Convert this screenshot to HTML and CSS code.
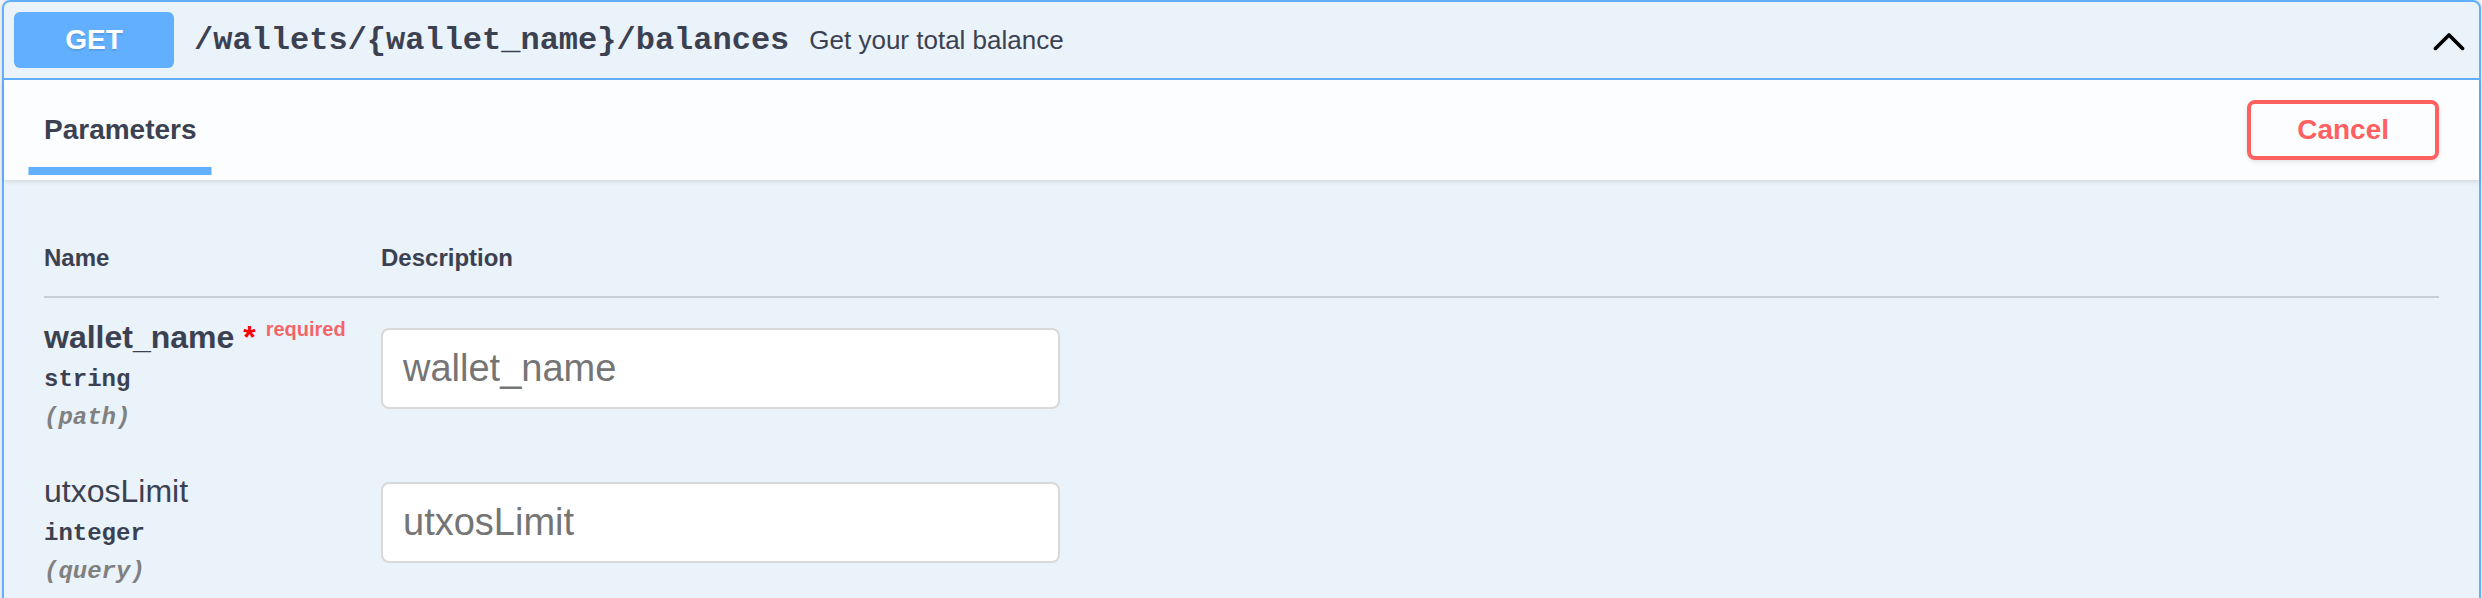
FILE: index.html
```html
<!DOCTYPE html>
<html lang="en">
<head>
<meta charset="utf-8">
<title>GET /wallets/{wallet_name}/balances</title>
<link rel="stylesheet" href="styles.css">
</head>
<body>
<div class="opblock">
  <div class="summary">
    <span class="method">GET</span>
    <span class="path">/wallets/{wallet_name}/balances</span>
    <div class="summary-desc">Get your total balance</div>
    <svg class="arrow" width="40" height="40" viewBox="0 0 20 20" aria-hidden="true"><path d="M17.418 14.908c-.362.362-.95.362-1.313 0L10 8.802 3.893 14.91c-.362.363-.95.363-1.313 0s-.362-.95 0-1.313l6.77-6.77a.931.931 0 0 1 1.314 0l6.77 6.770c.365.365.365.953.002 1.312z"/></svg>
  </div>
  <div class="section-header">
    <div class="tab-header">
      <h4 class="tab-item"><span>Parameters</span></h4>
    </div>
    <button class="btn-cancel" type="button">Cancel</button>
  </div>
  <div class="table-container">
    <div class="params">
      <div class="th">Name</div>
      <div class="th">Description</div>

      <div class="td">
        <div class="param-name required">wallet_name<span class="star">&nbsp;*</span></div>
        <div class="param-type">string</div>
        <div class="param-in">(path)</div>
      </div>
      <div class="td">
        <input class="param-input" type="text" placeholder="wallet_name">
      </div>

      <div class="td">
        <div class="param-name">utxosLimit</div>
        <div class="param-type">integer</div>
        <div class="param-in">(query)</div>
      </div>
      <div class="td">
        <input class="param-input" type="text" placeholder="utxosLimit">
      </div>
    </div>
  </div>
</div>
</body>
</html>
```
FILE: styles.css
```css
* { box-sizing: border-box; }

html, body {
  margin: 0;
  padding: 0;
  background: #fafafa;
  font-family: "Liberation Sans", Arial, sans-serif;
  color: #3b4151;
}

.opblock {
  margin: 0 1px 30px 2px;
  border: 2px solid #61affe;
  border-radius: 8px;
  background: rgba(97, 175, 254, 0.1);
  box-shadow: 0 0 6px rgba(0, 0, 0, 0.19);
}

.summary {
  display: flex;
  align-items: center;
  padding: 10px;
  border-bottom: 2px solid #61affe;
}

.method {
  min-width: 160px;
  padding: 12px 0;
  border-radius: 6px;
  background: #61affe;
  color: #fff;
  font-family: "Liberation Sans", Arial, sans-serif;
  font-size: 28px;
  line-height: 32px;
  font-weight: 700;
  text-align: center;
  text-shadow: 0 2px 0 rgba(0, 0, 0, 0.1);
}

.path {
  padding: 0 20px;
  font-family: "Liberation Mono", "Courier New", monospace;
  font-size: 32px;
  font-weight: 700;
  color: #3b4151;
}

.summary-desc {
  flex: 1;
  font-size: 26px;
  color: #3b4151;
}

.arrow {
  flex: none;
  fill: #000;
}

.section-header {
  display: flex;
  align-items: center;
  min-height: 100px;
  padding: 16px 40px;
  background: rgba(255, 255, 255, 0.8);
  box-shadow: 0 2px 4px rgba(0, 0, 0, 0.1);
}

.tab-header {
  display: flex;
  flex: 1;
}

.tab-item {
  margin: 0;
  font-size: 28px;
  font-weight: 700;
  color: #3b4151;
}

.tab-item span {
  position: relative;
}

.tab-item span::after {
  content: "";
  position: absolute;
  left: 50%;
  bottom: -30px;
  width: 120%;
  height: 8px;
  transform: translateX(-50%);
  background: #61affe;
}

.btn-cancel {
  padding: 10px 46px;
  border: 4px solid #ff6060;
  border-radius: 8px;
  background: transparent;
  color: #ff6060;
  font-family: "Liberation Sans", Arial, sans-serif;
  font-size: 28px;
  line-height: 32px;
  font-weight: 700;
  box-shadow: 0 2px 4px rgba(0, 0, 0, 0.1);
}

.table-container {
  padding: 40px;
}

.params {
  display: grid;
  grid-template-columns: 337px 1fr;
}

.th {
  padding: 24px 0;
  border-bottom: 2px solid rgba(59, 65, 81, 0.2);
  font-size: 24px;
  line-height: 28px;
  font-weight: 700;
  color: #3b4151;
}

.td {
  padding: 20px 0;
}

.param-name {
  font-size: 32px;
  line-height: 38px;
  color: #3b4151;
}

.param-name.required {
  font-weight: 700;
}

.param-name.required .star {
  color: red;
}

.param-name.required::after {
  content: "required";
  padding: 10px;
  font-size: 20px;
  line-height: 1;
  vertical-align: 12px;
  color: rgba(255, 0, 0, 0.6);
}

.param-type {
  padding: 10px 0;
  font-family: "Liberation Mono", "Courier New", monospace;
  font-size: 24px;
  line-height: 28px;
  font-weight: 700;
  color: #3b4151;
}

.param-in {
  font-family: "Liberation Mono", "Courier New", monospace;
  font-size: 24px;
  line-height: 28px;
  font-weight: 700;
  font-style: italic;
  color: #808080;
}

.param-input {
  display: block;
  width: 679px;
  margin: 10px 0;
  padding: 16px 20px;
  border: 2px solid #d9d9d9;
  border-radius: 8px;
  background: #fff;
  font-family: "Liberation Sans", Arial, sans-serif;
  font-size: 38px;
  line-height: 45px;
  color: #3b4151;
  outline: none;
}

.param-input::placeholder {
  color: #757575;
  opacity: 1;
}
```
